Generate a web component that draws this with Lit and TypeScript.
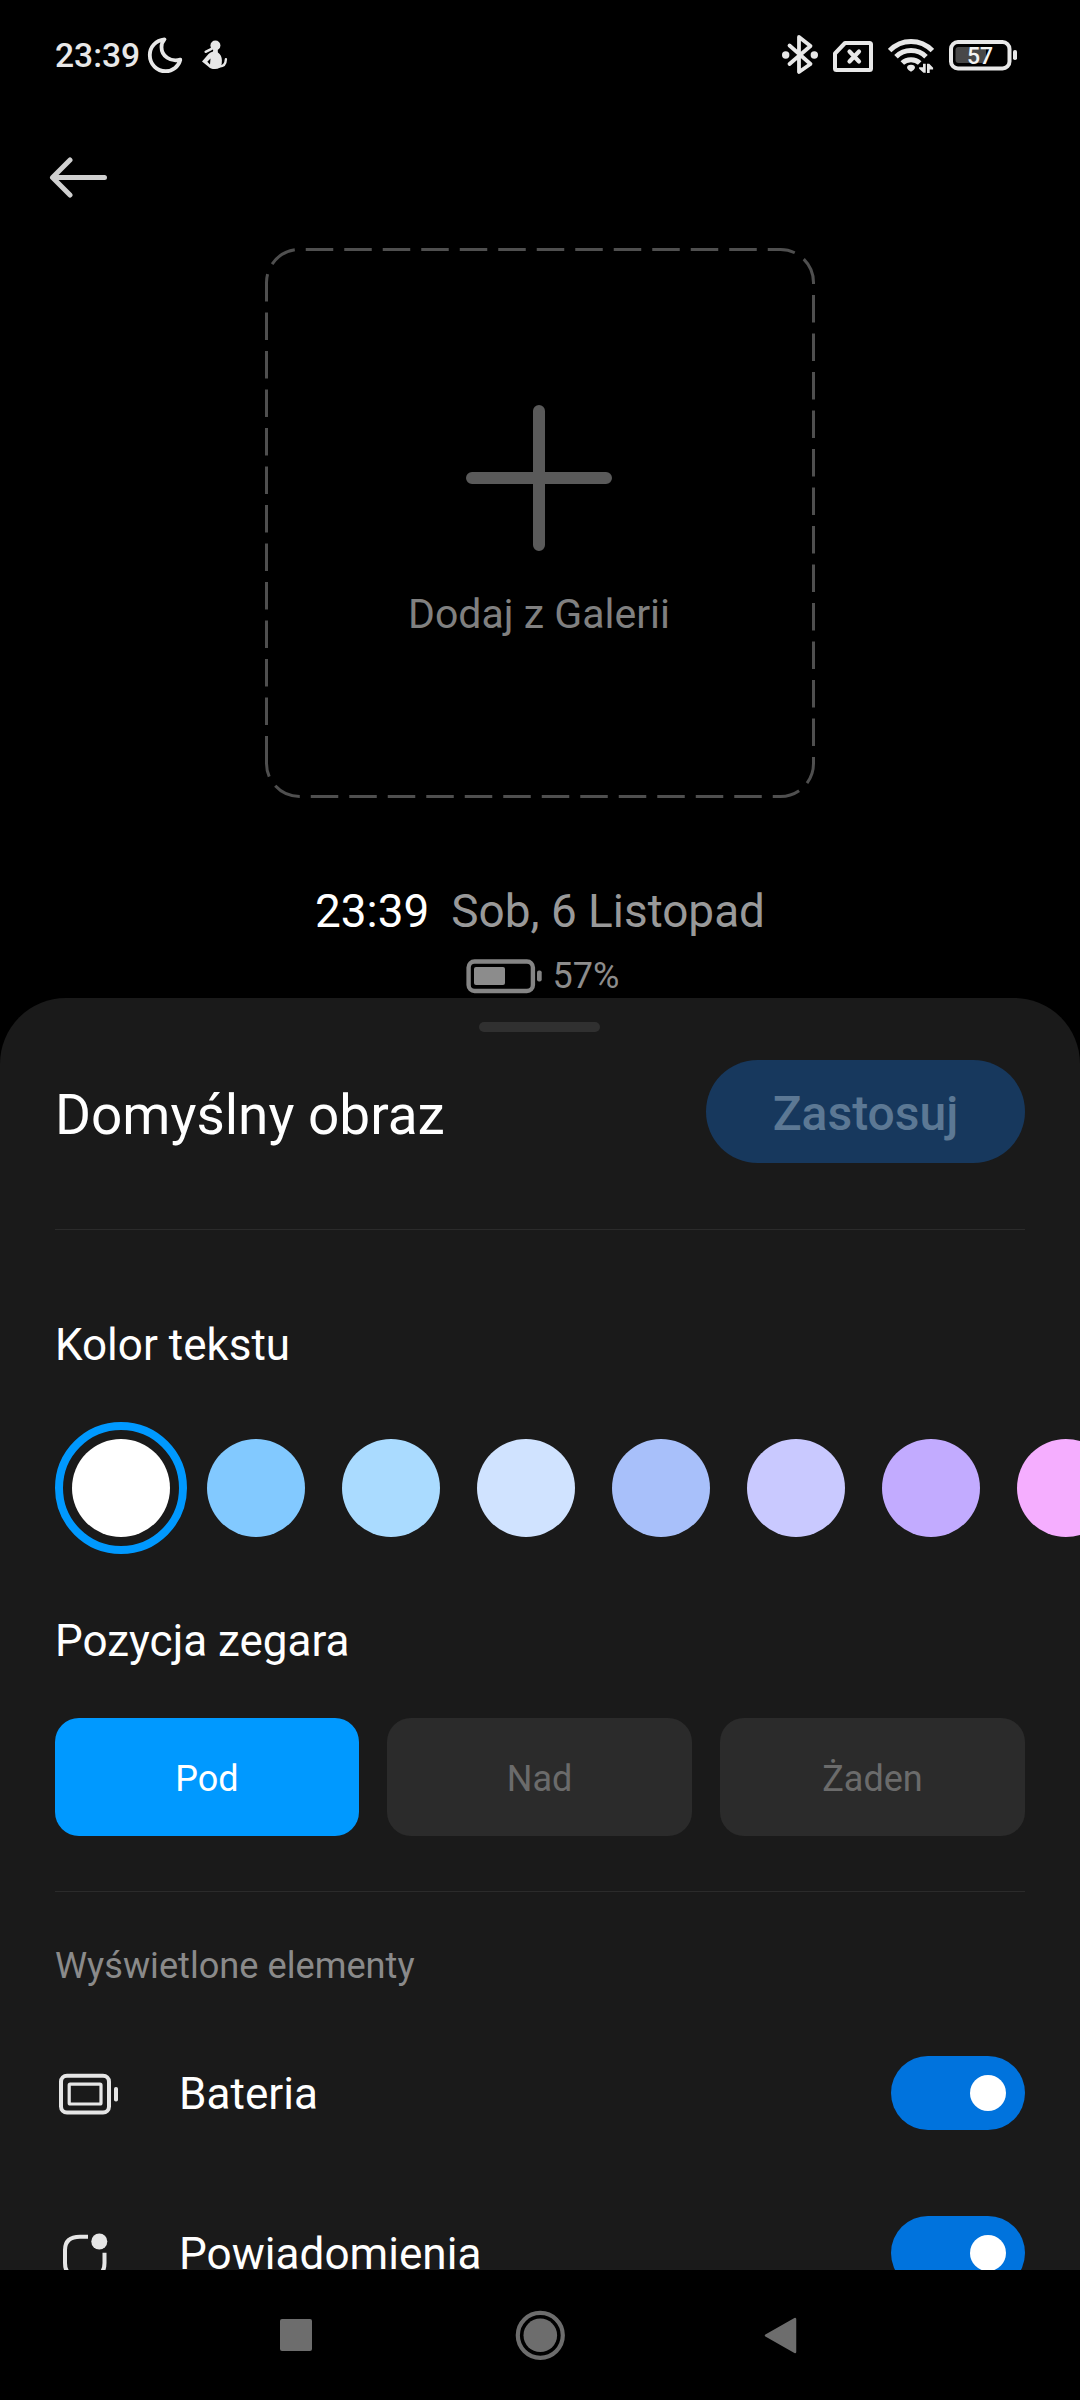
import { LitElement, html, css, svg } from "lit";
import { customElement, property, state } from "lit/decorators.js";
import { classMap } from "lit/directives/class-map.js";
import { styleMap } from "lit/directives/style-map.js";

@customElement("status-bar")
class StatusBar extends LitElement {
  static styles = css`
    :host {
      display: flex;
      align-items: center;
      height: 112px;
      padding: 0 62px 0 55px;
      box-sizing: border-box;
      color: #e8e8e8;
    }
    .time { font-size: 33.600px; font-weight: 500; line-height: 40px; width: 92px; white-space: nowrap; }
    svg { display: block; flex: none; }
    .figure { margin-left: 19px; }
    .spacer { flex: 1; }
    .sim, .wifi, .battery { margin-left: 15px; }
    .level { font-family: Roboto, sans-serif; font-size: 23px; font-weight: 500; }
  `;
  render() {
    return html`
      <span class="time">23:39</span>
      <svg width="36" height="112" viewBox="147 0 36 112" fill="none" stroke="#e8e8e8" stroke-width="3.800" stroke-linejoin="round">
        <path d="M164.500 39.300C155.800 40.300 149.800 47 149.800 55C149.800 64.200 156.800 71.200 165.700 71.200C172.800 71.200 178.600 66.500 180.300 59.700C170.500 62.500 161.500 56 161.500 47.200C161.500 44 162.600 41.400 164.500 39.300Z"/>
      </svg>
      <svg class="figure" width="26" height="112" viewBox="203 0 26 112" fill="#e8e8e8">
        <circle cx="216.400" cy="45.500" r="5"/>
        <path d="M214.300 49h4.400l.2 3.500c2.600 1.500 4 4.500 4 8l-.2 3.500c-.5 3.200-3 5-6.700 5c-3 0-5.300-.8-6.500-2.300l-6.500-5.200l6.500-7.500c1.200-1.200 2.800-2 4.500-2.600zM211.500 58.500l-3.200 3.200l2.700 2.800z" fill-rule="evenodd"/>
        <path d="M206.600 51.800l6-2.900M220.500 66.500c4 0 6.200-2 6.400-7.200" fill="none" stroke="#e8e8e8" stroke-width="2.400" stroke-linecap="round"/>
      </svg>
      <span class="spacer"></span>
      <svg width="36" height="112" viewBox="782 0 36 112" fill="none" stroke="#e8e8e8" stroke-width="3.800" stroke-linejoin="round" stroke-linecap="round">
        <path d="M789.500 45.500L810.500 64L799 72V37L810.500 46L789.500 64"/>
        <circle cx="785.700" cy="55" r="3.700" fill="#e8e8e8" stroke="none"/>
        <circle cx="814.300" cy="55" r="3.700" fill="#e8e8e8" stroke="none"/>
      </svg>
      <svg class="sim" width="40" height="112" viewBox="833 0 40 112" fill="none" stroke="#e8e8e8" stroke-linejoin="round" stroke-linecap="round">
        <path d="M845 43H869.500Q871 43 871 44.500V68.500Q871 70 869.500 70H836.500Q835 70 835 68.500V53.500Z" stroke-width="4"/>
        <path d="M849.500 51.500L859 61.500M859 51.500L849.500 61.500" stroke-width="4.200"/>
      </svg>
      <svg class="wifi" width="46" height="112" viewBox="888 0 46 112" fill="none" stroke="#e8e8e8" stroke-width="5">
        <path d="M889.600 50.600C901.500 38.300 920.500 38.300 932.400 50.600"/>
        <path d="M896 56.800C904.300 48.500 917.700 48.500 926 56.800"/>
        <path d="M902.300 63C906.800 58.500 915.200 58.500 919.700 63"/>
        <path d="M907 68Q907 64.800 911 64.800T915 68Q914 70.500 911 71.800Q908 70.500 907 68Z" fill="#e8e8e8" stroke="none"/>
        <path d="M923 63.800h2.700v9h-2.200l-4.400-4v-1.600h3.900zM927 73v-9.200h2.200l3.900 4v1.600h-3.400v3.600z" fill="#e8e8e8" stroke="none"/>
      </svg>
      <svg class="battery" width="69" height="112" viewBox="949 0 69 112">
        <rect x="955.500" y="47" width="30.500" height="16" rx="3" fill="#484848"/>
        <rect x="951" y="42" width="58.500" height="26.500" rx="7" fill="none" stroke="#e8e8e8" stroke-width="4"/>
        <rect x="1013" y="50" width="4" height="10" rx="1.800" fill="#e8e8e8"/>
        <text class="level" x="980" y="64" text-anchor="middle" fill="#f4f4f4">57</text>
      </svg>
    `;
  }
}

@customElement("toggle-switch")
class ToggleSwitch extends LitElement {
  @property({ type: Boolean }) on = true;
  static styles = css`
    :host { display: block; flex: none; }
    .track {
      display: flex;
      align-items: center;
      justify-content: flex-start;
      width: 134px;
      height: 74px;
      padding: 0 19px;
      box-sizing: border-box;
      border-radius: 37px;
      background: #3a3a3a;
    }
    .on { justify-content: flex-end; background: #0073dd; }
    .knob { width: 36px; height: 36px; border-radius: 50%; background: #fff; }
  `;
  render() {
    return html`<div class=${classMap({ track: true, on: this.on })}><div class="knob"></div></div>`;
  }
}

const batteryIcon = svg`
  <rect x="61" y="75.700" width="48" height="36.800" rx="6" stroke-width="4"/>
  <rect x="69.200" y="84.200" width="31.800" height="19.800" rx="1" stroke-width="3.200"/>
  <rect x="114" y="87" width="4" height="14.500" rx="1.800" fill="#e6e6e6" stroke="none"/>`;

const notificationIcon = svg`
  <path d="M88 76.800H80Q65 76.800 65 90V103Q65 116.500 78.500 116.500H91Q104.500 116.500 104.500 103V92.700" stroke-width="4"/>
  <circle cx="99.300" cy="81.500" r="8" fill="#e6e6e6" stroke="none"/>`;

@customElement("app-root")
class AppRoot extends LitElement {
  @state() private color = 0;
  @state() private position = 0;

  private colors = ["#ffffff", "#82c9ff", "#aadbff", "#d0e3ff", "#a8c0fa", "#c9c9ff", "#c2abff", "#f5aeff"];
  private positions = ["Pod", "Nad", "Żaden"];
  private items = [
    { label: "Bateria", icon: batteryIcon },
    { label: "Powiadomienia", icon: notificationIcon },
  ];

  static styles = css`
    :host {
      display: flex;
      flex-direction: column;
      width: 1080px;
      height: 2400px;
      overflow: hidden;
      background: #000;
      color: #fff;
      font-family: Roboto, sans-serif;
    }
    * { box-sizing: border-box; }
    svg { display: block; flex: none; }
    .top { flex: none; height: 136px; padding: 45px 0 0 49px; }
    .frame {
      position: relative;
      flex: none;
      display: flex;
      flex-direction: column;
      align-items: center;
      align-self: center;
      width: 550px;
      height: 550px;
      padding-top: 157px;
    }
    .dashes { position: absolute; inset: 0; }
    .plus { margin-right: 2px; }
    .add { margin: 39px 2px 0 0; font-size: 41px; line-height: 48px; color: #808080; }
    .clock {
      flex: none;
      display: flex;
      justify-content: center;
      gap: 22px;
      margin-top: 85px;
      font-size: 45.900px;
      line-height: 56px;
    }
    .date { color: #999; }
    .charge {
      flex: none;
      display: flex;
      justify-content: center;
      align-items: center;
      gap: 11px;
      height: 44px;
      margin-top: 15px;
      padding-left: 5px;
      font-size: 36px;
      line-height: 44px;
      color: #8c8c8c;
    }
    .sheet {
      flex: none;
      display: flex;
      flex-direction: column;
      height: 1272px;
      padding: 24px 55px 0;
      overflow: hidden;
      border-radius: 66px 66px 0 0;
      background: #1a1a1a;
    }
    .sheet > * { flex: none; }
    .handle { align-self: center; width: 121px; height: 10px; margin-right: 1px; border-radius: 5px; background: #303030; }
    .header { display: flex; align-items: center; justify-content: space-between; height: 103px; margin-top: 28px; }
    .title { padding-top: 6px; font-size: 54.900px; line-height: 64px; }
    .apply {
      display: flex;
      align-items: center;
      justify-content: center;
      width: 319px;
      height: 103px;
      padding: 4px 0 0;
      border: 0;
      border-radius: 52px;
      background: #17385d;
      color: #5c7894;
      font: 500 48px/56px Roboto, sans-serif;
    }
    .divider { height: 1px; background: #2b2b2b; }
    .header + .divider { margin-top: 66px; }
    .section { font-size: 44px; line-height: 52px; }
    .divider + .section { margin-top: 89px; }
    .swatches { display: flex; gap: 3px; height: 132px; margin-top: 51px; }
    .swatch {
      flex: none;
      display: flex;
      align-items: center;
      justify-content: center;
      width: 132px;
      height: 132px;
      border: 8px solid transparent;
      border-radius: 50%;
    }
    .chosen { border-color: #0099ff; }
    .disc { width: 98px; height: 98px; border-radius: 50%; }
    .swatches + .section { margin-top: 61px; }
    .positions { display: grid; grid-template-columns: 304px 305px 305px; gap: 28px; height: 118px; margin-top: 51px; }
    .position {
      padding: 3px 0 0;
      border: 0;
      border-radius: 24px;
      background: #2b2b2b;
      color: #6b6b6b;
      font: 36px/42px Roboto, sans-serif;
    }
    .active { background: #0099ff; color: #fff; }
    .positions + .divider { margin-top: 55px; }
    .caption { margin-top: 52px; font-size: 36.200px; line-height: 44px; color: #8a8a8a; }
    .items { margin-top: 25px; }
    .item { display: flex; align-items: center; height: 160px; }
    .label { flex: 1; margin-left: 58px; padding-top: 2px; font-size: 44.100px; line-height: 52px; }
    .nav { flex: none; display: flex; height: 130px; }
  `;

  render() {
    return html`
      <status-bar></status-bar>
      <div class="top">
        <svg width="60" height="42" viewBox="49 157 60 42" fill="none" stroke="#d0d0d0" stroke-width="5" stroke-linecap="round" stroke-linejoin="round">
          <path d="M104.500 177.500H53M70 160L52.500 177.500L70 195"/>
        </svg>
      </div>
      <div class="frame">
        <svg class="dashes" width="550" height="550" viewBox="265 248 550 550" fill="none" stroke="#4f4f4f" stroke-width="3" stroke-dasharray="27.500 11">
          <path d="M266.500 763.500V282.500A33 33 0 0 1 299.500 249.500H780.500A33 33 0 0 1 813.500 282.500V763.500A33 33 0 0 1 780.500 796.500H299.500A33 33 0 0 1 266.500 763.500Z"/>
        </svg>
        <svg class="plus" width="146" height="146" viewBox="0 0 146 146" stroke="#5a5a5a" stroke-width="12" stroke-linecap="round">
          <path d="M73 6V140M6 73H140"/>
        </svg>
        <span class="add">Dodaj z Galerii</span>
      </div>
      <div class="clock"><span>23:39</span><span class="date">Sob, 6 Listopad</span></div>
      <div class="charge">
        <svg width="76" height="36" viewBox="466 958 76 36">
          <rect x="468.600" y="961.500" width="64.300" height="29.500" rx="6" fill="none" stroke="#858585" stroke-width="4.400"/>
          <rect x="474" y="967" width="31" height="18" rx="2" fill="#8c8c8c"/>
          <rect x="537" y="970.500" width="4.700" height="11" rx="2" fill="#858585"/>
        </svg>
        <span>57%</span>
      </div>
      <div class="sheet">
        <div class="handle"></div>
        <div class="header">
          <span class="title">Domyślny obraz</span>
          <button class="apply">Zastosuj</button>
        </div>
        <div class="divider"></div>
        <div class="section">Kolor tekstu</div>
        <div class="swatches">
          ${this.colors.map(
            (c, i) => html`<div class=${classMap({ swatch: true, chosen: i === this.color })} @click=${() => (this.color = i)}>
              <div class="disc" style=${styleMap({ background: c })}></div>
            </div>`
          )}
        </div>
        <div class="section">Pozycja zegara</div>
        <div class="positions">
          ${this.positions.map(
            (p, i) => html`<button class=${classMap({ position: true, active: i === this.position })} @click=${() => (this.position = i)}>${p}</button>`
          )}
        </div>
        <div class="divider"></div>
        <div class="caption">Wyświetlone elementy</div>
        <div class="items">
          ${this.items.map(
            (item) => html`<div class="item">
              <svg width="66" height="66" viewBox="55 60 66 66" fill="none" stroke="#e6e6e6">${item.icon}</svg>
              <span class="label">${item.label}</span>
              <toggle-switch on></toggle-switch>
            </div>`
          )}
        </div>
      </div>
      <div class="nav">
        <svg width="1080" height="130" viewBox="0 2270 1080 130" fill="#6d6d6d">
          <rect x="280" y="2319" width="32" height="32" rx="2"/>
          <circle cx="540.300" cy="2335.300" r="16.800"/>
          <circle cx="540.300" cy="2335.300" r="22.500" fill="none" stroke="#6d6d6d" stroke-width="4.200"/>
          <path d="M766 2335.500L795 2319V2352Z" stroke="#6d6d6d" stroke-width="2.500" stroke-linejoin="round"/>
        </svg>
      </div>
    `;
  }
}
